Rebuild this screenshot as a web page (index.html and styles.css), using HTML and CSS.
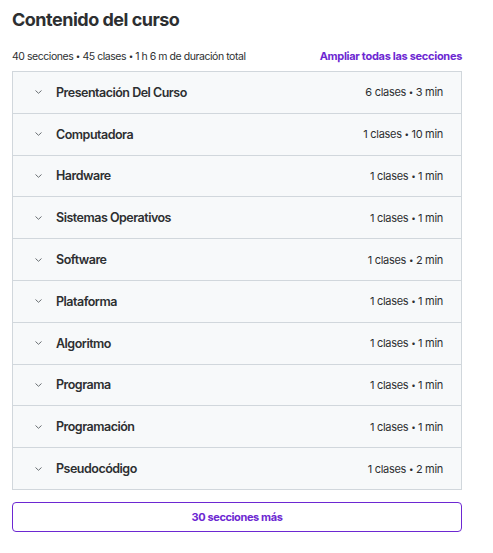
FILE: index.html
```html
<!DOCTYPE html>
<html lang="es">
<head>
<meta charset="utf-8">
<link rel="stylesheet" href="styles.css">
</head>
<body>
<div class="wrap">
  <h2 class="title">Contenido del curso</h2>
  <div class="meta">
    <span class="summary">40 secciones <span class="dot">•</span> 45 clases <span class="dot">•</span> 1 h 6 m de duración total</span>
    <button class="expand">Ampliar todas las secciones</button>
  </div>
  <div class="sections">
    <div class="row"><span class="chev"><svg viewBox="0 0 7 4" width="7" height="4"><path d="M0.5 0.5 L3.5 3.3 L6.5 0.5" fill="none" stroke="#6a6f73" stroke-width="1"/></svg></span><span class="name">Presentación Del Curso</span><span class="info">6 clases <span class="dot">•</span> 3 min</span></div>
    <div class="row"><span class="chev"><svg viewBox="0 0 7 4" width="7" height="4"><path d="M0.5 0.5 L3.5 3.3 L6.5 0.5" fill="none" stroke="#6a6f73" stroke-width="1"/></svg></span><span class="name">Computadora</span><span class="info">1 clases <span class="dot">•</span> 10 min</span></div>
    <div class="row"><span class="chev"><svg viewBox="0 0 7 4" width="7" height="4"><path d="M0.5 0.5 L3.5 3.3 L6.5 0.5" fill="none" stroke="#6a6f73" stroke-width="1"/></svg></span><span class="name">Hardware</span><span class="info">1 clases <span class="dot">•</span> 1 min</span></div>
    <div class="row"><span class="chev"><svg viewBox="0 0 7 4" width="7" height="4"><path d="M0.5 0.5 L3.5 3.3 L6.5 0.5" fill="none" stroke="#6a6f73" stroke-width="1"/></svg></span><span class="name">Sistemas Operativos</span><span class="info">1 clases <span class="dot">•</span> 1 min</span></div>
    <div class="row"><span class="chev"><svg viewBox="0 0 7 4" width="7" height="4"><path d="M0.5 0.5 L3.5 3.3 L6.5 0.5" fill="none" stroke="#6a6f73" stroke-width="1"/></svg></span><span class="name">Software</span><span class="info">1 clases <span class="dot">•</span> 2 min</span></div>
    <div class="row"><span class="chev"><svg viewBox="0 0 7 4" width="7" height="4"><path d="M0.5 0.5 L3.5 3.3 L6.5 0.5" fill="none" stroke="#6a6f73" stroke-width="1"/></svg></span><span class="name">Plataforma</span><span class="info">1 clases <span class="dot">•</span> 1 min</span></div>
    <div class="row"><span class="chev"><svg viewBox="0 0 7 4" width="7" height="4"><path d="M0.5 0.5 L3.5 3.3 L6.5 0.5" fill="none" stroke="#6a6f73" stroke-width="1"/></svg></span><span class="name">Algoritmo</span><span class="info">1 clases <span class="dot">•</span> 1 min</span></div>
    <div class="row"><span class="chev"><svg viewBox="0 0 7 4" width="7" height="4"><path d="M0.5 0.5 L3.5 3.3 L6.5 0.5" fill="none" stroke="#6a6f73" stroke-width="1"/></svg></span><span class="name">Programa</span><span class="info">1 clases <span class="dot">•</span> 1 min</span></div>
    <div class="row"><span class="chev"><svg viewBox="0 0 7 4" width="7" height="4"><path d="M0.5 0.5 L3.5 3.3 L6.5 0.5" fill="none" stroke="#6a6f73" stroke-width="1"/></svg></span><span class="name">Programación</span><span class="info">1 clases <span class="dot">•</span> 1 min</span></div>
    <div class="row"><span class="chev"><svg viewBox="0 0 7 4" width="7" height="4"><path d="M0.5 0.5 L3.5 3.3 L6.5 0.5" fill="none" stroke="#6a6f73" stroke-width="1"/></svg></span><span class="name">Pseudocódigo</span><span class="info">1 clases <span class="dot">•</span> 2 min</span></div>
  </div>
  <button class="more">30 secciones más</button>
</div>
</body>
</html>
```
FILE: styles.css
```css
* { box-sizing: border-box; }
body {
  margin: 0;
  background: #ffffff;
  font-family: "Inter", "Liberation Sans", sans-serif;
  color: #2d2f31;
}
.wrap {
  width: 450px;
  margin-left: 12px;
  padding-top: 8px;
}
.title {
  margin: 0;
  font-size: 18px;
  font-weight: 700;
  line-height: 24px;
  letter-spacing: -0.5px;
}
.meta {
  display: flex;
  justify-content: space-between;
  align-items: center;
  margin-top: 16px;
  height: 16px;
  margin-bottom: 7px;
}
.summary {
  font-size: 10.5px;
  letter-spacing: -0.45px;
  font-variant-numeric: proportional-nums;
}
.dot {
  font-size: 8px;
  vertical-align: 1.5px;
}
.expand {
  border: 0;
  background: none;
  padding: 0;
  font-family: inherit;
  font-size: 11px;
  font-weight: 700;
  color: #6d28d2;
  letter-spacing: -0.3px;
  cursor: pointer;
}
.sections {
  border: 1px solid #d1d7dc;
  background: #f7f9fa;
}
.row {
  display: flex;
  align-items: center;
  height: 41.8px;
  padding: 0 18px 0 22px;
  border-top: 1px solid #d1d7dc;
}
.row:first-child { border-top: 0; height: 40.8px; }
.chev {
  display: flex;
  width: 21px;
  align-items: center;
}
.name {
  flex: 1;
  font-size: 12.5px;
  font-weight: 600;
  letter-spacing: -0.5px;
}
.info {
  font-size: 11px;
  letter-spacing: -0.3px;
  color: #2d2f31;
  font-variant-numeric: proportional-nums;
}
.more {
  display: block;
  width: 450px;
  height: 30px;
  margin-top: 12px;
  border: 1px solid #6d28d2;
  border-radius: 4px;
  background: #ffffff;
  color: #6d28d2;
  font-family: inherit;
  font-size: 11px;
  font-weight: 700;
  letter-spacing: -0.4px;
  cursor: pointer;
}
```
